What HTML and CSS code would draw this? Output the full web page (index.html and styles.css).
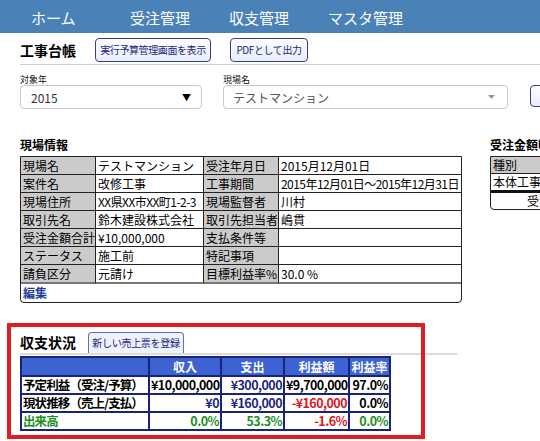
FILE: index.html
```html
<!DOCTYPE html>
<html lang="ja">
<head>
<meta charset="utf-8">
<title>工事台帳</title>
<link rel="stylesheet" href="styles.css">
</head>
<body>
<nav class="topnav">
  <a class="nav-item">ホーム</a>
  <a class="nav-item">受注管理</a>
  <a class="nav-item">収支管理</a>
  <a class="nav-item">マスタ管理</a>
</nav>
<div class="page">
  <div class="titlebar">
    <h1 class="page-title">工事台帳</h1>
    <button class="btn btn-budget">実行予算管理画面を表示</button>
    <button class="btn btn-pdf">PDFとして出力</button>
  </div>

  <div class="filters">
    <div class="field field-year">
      <label class="field-label">対象年</label>
      <div class="select">
        <span class="select-text">2015</span>
        <span class="select-arrow">▼</span>
      </div>
    </div>
    <div class="field field-site">
      <label class="field-label">現場名</label>
      <div class="select select-site">
        <span class="select-text">テストマンション</span>
        <svg class="caret" width="7" height="4" viewBox="0 0 7 4"><path d="M0 0 L7 0 L3.5 4 Z" fill="#999"/></svg>
      </div>
    </div>
    <button class="btn btn-show">表示</button>
  </div>

  <div class="info-row">
    <section class="site-info">
      <h2 class="section-title">現場情報</h2>
      <table class="info-table">
        <colgroup><col class="c1"><col class="c2"><col class="c3"><col class="c4"></colgroup>
        <tr><th>現場名</th><td>テストマンション</td><th>受注年月日</th><td>2015月12月01日</td></tr>
        <tr><th>案件名</th><td>改修工事</td><th>工事期間</th><td class="tight">2015年12月01日～2015年12月31日</td></tr>
        <tr><th>現場住所</th><td class="tight">XX県XX市XX町1-2-3</td><th>現場監督者</th><td>川村</td></tr>
        <tr><th>取引先名</th><td>鈴木建設株式会社</td><th>取引先担当者</th><td>嶋貫</td></tr>
        <tr><th>受注金額合計</th><td>¥10,000,000</td><th>支払条件等</th><td></td></tr>
        <tr><th>ステータス</th><td>施工前</td><th>特記事項</th><td></td></tr>
        <tr class="last"><th>請負区分</th><td>元請け</td><th>目標利益率%</th><td>30.0 %</td></tr>
        <tr class="edit-row"><td colspan="4"><a class="edit-link">編集</a></td></tr>
      </table>
    </section>
    <section class="order-detail">
      <h2 class="section-title">受注金額明細</h2>
      <table class="detail-table">
        <colgroup><col class="d1"><col class="d2"></colgroup>
        <tr><th>種別</th><th>金額</th></tr>
        <tr><td>本体工事</td><td>¥10,000,000</td></tr>
        <tr class="sum"><td colspan="2">受注金額合計</td></tr>
      </table>
    </section>
  </div>

  <section class="balance">
    <div class="balance-head">
      <h2 class="balance-title">収支状況</h2>
      <button class="tab-btn">新しい売上票を登録</button>
    </div>
    <table class="bal-table">
      <colgroup><col class="b1"><col class="b2"><col class="b3"><col class="b4"><col class="b5"></colgroup>
      <tr class="bal-head"><th></th><th>収入</th><th>支出</th><th>利益額</th><th>利益率</th></tr>
      <tr><td class="lbl">予定利益（受注/予算）</td><td>¥10,000,000</td><td class="navy">¥300,000</td><td>¥9,700,000</td><td>97.0%</td></tr>
      <tr><td class="lbl">現状推移（売上/支払）</td><td class="navy">¥0</td><td class="navy">¥160,000</td><td class="red">-¥160,000</td><td>0.0%</td></tr>
      <tr class="green"><td class="lbl">出来高</td><td>0.0%</td><td>53.3%</td><td class="red">-1.6%</td><td>0.0%</td></tr>
    </table>
  </section>
</div>
<div class="highlight"></div>
</body>
</html>
```

FILE: styles.css
```css
html, body {
  margin: 0;
  padding: 0;
  overflow: hidden;
}
body {
  width: 540px;
  height: 441px;
  position: relative;
  background: #fff;
  font-family: "Noto Sans CJK JP", "Liberation Sans", sans-serif;
  color: #000;
}

/* top nav */
.topnav {
  display: flex;
  height: 33px;
  background: #4a82b8;
  padding-left: 31px;
  align-items: center;
}
.nav-item {
  width: 99px;
  color: #fff;
  font-size: 15px;
  line-height: 18px;
  padding-top: 2px;
}

.page {
  padding-left: 20px;
}

/* title */
.titlebar {
  display: flex;
  align-items: center;
  margin-top: 5px;
  padding-bottom: 2px;
  border-bottom: 1px solid #cfcfcf;
  height: 24px;
}
.page-title {
  margin: 0;
  font-size: 14px;
  font-weight: bold;
  line-height: 16px;
  white-space: nowrap;
  flex-shrink: 0;
  width: 75px;
}
.btn {
  height: 24px;
  padding: 0 2px;
  border: 1px solid #3b3d84;
  border-radius: 4px;
  background: linear-gradient(#ffffff, #e6ecfb);
  color: #1e2580;
  font-family: "Noto Sans CJK JP", sans-serif;
  font-size: 10px;
  line-height: 12px;
  letter-spacing: -0.4px;
  white-space: nowrap;
  box-sizing: border-box;
  flex-shrink: 0;
}
.btn-budget { width: 116px; }
.btn-pdf { width: 78px; margin-left: 19px; }

/* filters */
.filters {
  display: flex;
  align-items: flex-end;
  margin-top: 9px;
}
.field {
  display: flex;
  flex-direction: column;
  flex-shrink: 0;
}
.field-year { width: 182px; }
.field-site { width: 285px; margin-left: 21px; }
.field-label {
  font-size: 9px;
  line-height: 11px;
  height: 11px;
  color: #111;
}
.select {
  height: 24px;
  box-sizing: border-box;
  border: 1px solid #c8c8c8;
  border-radius: 4px;
  display: flex;
  align-items: center;
  padding: 0 10px 0 10px;
  font-size: 12px;
  color: #333;
  justify-content: space-between;
}
.select-arrow {
  font-size: 9px;
  color: #000;
}
.select-site {
  padding-left: 9px;
  color: #555;
}
.caret { margin-right: 2px; }
.btn-show {
  margin-left: 22px;
  margin-bottom: 2px;
  width: 40px;
  height: 22px;
}

/* info row */
.info-row {
  display: flex;
  margin-top: 29px;
}
.section-title {
  margin: 0 0 5px 0;
  font-size: 12px;
  line-height: 13px;
  font-weight: bold;
  white-space: nowrap;
}
.site-info { width: 440px; flex-shrink: 0; }
.order-detail { margin-left: 30px; flex-shrink: 0; }

.info-table {
  width: 440px;
  table-layout: fixed;
  border-collapse: separate;
  border-spacing: 0;
  border: 1px solid #222;
  border-radius: 0 0 4px 4px;
  font-size: 12px;
}
.info-table .c1 { width: 75px; }
.info-table .c2 { width: 108px; }
.info-table .c3 { width: 75px; }
.info-table .c4 { width: 182px; }
.info-table th,
.info-table td {
  height: 17px;
  padding: 0 0 0 2px;
  text-align: left;
  font-weight: normal;
  white-space: nowrap;
  overflow: hidden;
  line-height: 16px;
  border-right: 1px solid #222;
  border-bottom: 1px solid #222;
}
.info-table th {
  background: #cbcbcb;
}
.info-table td:last-child { border-right: none; }
.info-table .tight { letter-spacing: -0.55px; }
.info-table tr.last th,
.info-table tr.last td { border-bottom: 2px solid #777; }
.info-table .edit-row td {
  border: none;
  height: 18px;
}
.edit-link {
  color: #1d3d9a;
  font-weight: bold;
  font-size: 12px;
}

.detail-table {
  width: 146px;
  table-layout: fixed;
  border-collapse: separate;
  border-spacing: 0;
  border: 1px solid #222;
  border-radius: 0 0 4px 4px;
  font-size: 12px;
}
.detail-table .d1 { width: 70px; }
.detail-table th,
.detail-table td {
  height: 16px;
  padding: 0 0 0 2px;
  text-align: left;
  font-weight: normal;
  white-space: nowrap;
  line-height: 16px;
  border-bottom: 1px solid #222;
}
.detail-table th { background: #cbcbcb; }
.detail-table tr:nth-child(2) td { border-bottom: 3px solid #111; }
.detail-table .sum td {
  border-bottom: none;
  text-align: center;
  padding-left: 0;
}

/* balance */
.balance {
  margin-top: 29px;
}
.balance-head {
  display: flex;
  align-items: flex-end;
  width: 437px;
  border-bottom: 2px solid #dcdcdc;
}
.balance-title {
  margin: 0 0 3px 0;
  font-size: 14px;
  line-height: 16px;
  font-weight: bold;
}
.tab-btn {
  margin-left: 12px;
  height: 21px;
  width: 96px;
  padding: 0 2px;
  border: 1px solid #5d73b3;
  border-bottom: none;
  border-radius: 4px 4px 0 0;
  background: #edf2fd;
  color: #1e2580;
  font-family: "Noto Sans CJK JP", sans-serif;
  font-size: 10px;
  line-height: 12px;
  letter-spacing: -0.3px;
  white-space: nowrap;
}

.bal-table {
  margin-top: 1px;
  width: 369px;
  table-layout: fixed;
  border-collapse: collapse;
  border: 2px solid #1a237a;
  font-size: 12.5px;
  font-weight: bold;
}
.bal-table .b1 { width: 128px; }
.bal-table .b2 { width: 72px; }
.bal-table .b3 { width: 63px; }
.bal-table .b4 { width: 65px; }
.bal-table .b5 { width: 41px; }
.bal-table th,
.bal-table td {
  border: 2px solid #1a237a;
  padding: 0 1px;
  line-height: 16px;
  height: 16px;
  text-align: right;
  white-space: nowrap;
  overflow: hidden;
  letter-spacing: -0.55px;
}
.bal-head th {
  background: #3d63d2;
  color: #fff;
  text-align: center;
  height: 17px;
  font-size: 12px;
  letter-spacing: 0;
}
.bal-table .lbl {
  text-align: left;
  padding-left: 1px;
  letter-spacing: -0.9px;
}
.bal-table .navy { color: #1c2486; }
.bal-table .red { color: #e0141b; }
.bal-table .green td { color: #1d8f1d; }
.bal-table .green td.red { color: #e0141b; }

/* annotation overlay */
.highlight {
  position: absolute;
  left: 7px;
  top: 323px;
  width: 418px;
  height: 116px;
  box-sizing: border-box;
  border: 4px solid #e31b23;
  pointer-events: none;
}
```
